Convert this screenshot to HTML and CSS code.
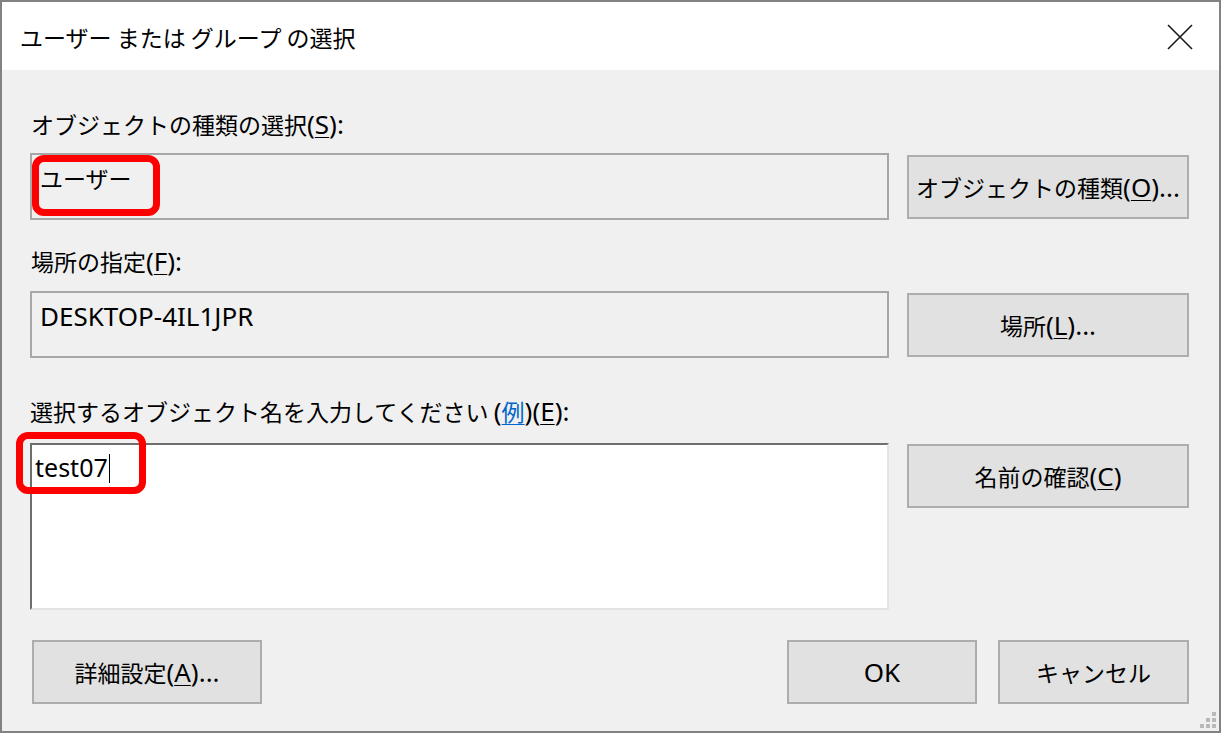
FILE: index.html
```html
<!DOCTYPE html>
<html lang="ja">
<head>
<meta charset="utf-8">
<title>ユーザー または グループ の選択</title>
<link rel="stylesheet" href="styles.css">
</head>
<body>
<div class="window">
  <div class="titlebar">
    <span class="title">ユーザー または グループ の選択</span>
    <svg class="close" width="26" height="26" viewBox="0 0 26 26"><path d="M1 1 L25 25 M25 1 L1 25" stroke="#1a1a1a" stroke-width="1.6" fill="none"/></svg>
  </div>
  <div class="content">
    <div class="label l1">オブジェクトの種類の選択<span class="en">(<u>S</u>):</span></div>
    <div class="row r1">
      <div class="field">ユーザー</div>
      <div class="btn side">オブジェクトの種類<span class="en">(<u>O</u>)...</span></div>
    </div>
    <div class="label l2">場所の指定<span class="en">(<u>F</u>):</span></div>
    <div class="row r2">
      <div class="field"><span class="en">DESKTOP-4IL1JPR</span></div>
      <div class="btn side">場所<span class="en">(<u>L</u>)...</span></div>
    </div>
    <div class="label l3">選択するオブジェクト名を入力してください <span class="en">(</span><a class="link">例</a><span class="en">)(<u>E</u>):</span></div>
    <div class="row r3">
      <div class="textarea"><span class="en typed">test07</span><span class="caret"></span></div>
      <div class="btn side check">名前の確認<span class="en">(<u>C</u>)</span></div>
    </div>
    <div class="footer">
      <div class="btn adv">詳細設定<span class="en">(<u>A</u>)...</span></div>
      <div class="btn ok"><span class="en">OK</span></div>
      <div class="btn cancel">キャンセル</div>
    </div>
  </div>
  <div class="mark m1"></div>
  <div class="mark m2"></div>
  <svg class="grip" width="18" height="18" viewBox="0 0 18 18">
    <rect x="13" y="1" width="4" height="4" fill="#b9b9b9"/>
    <rect x="7" y="7" width="4" height="4" fill="#b9b9b9"/>
    <rect x="13" y="7" width="4" height="4" fill="#b9b9b9"/>
    <rect x="1" y="13" width="4" height="4" fill="#b9b9b9"/>
    <rect x="7" y="13" width="4" height="4" fill="#b9b9b9"/>
    <rect x="13" y="13" width="4" height="4" fill="#b9b9b9"/>
  </svg>
</div>
</body>
</html>
```
FILE: styles.css
```css
html, body {
  margin: 0;
  padding: 0;
  background: #ffffff;
}

.window {
  position: relative;
  box-sizing: border-box;
  width: 1221px;
  height: 733px;
  border: 2px solid #828282;
  display: flex;
  flex-direction: column;
  font-family: "Noto Sans CJK JP", sans-serif;
  font-size: 23px;
  color: #000;
  overflow: hidden;
}

.en {
  font-family: "Noto Sans", "Noto Sans CJK JP", sans-serif;
  font-size: 26px;
}

u {
  text-decoration-thickness: 1px;
  text-underline-offset: 3px;
}

.titlebar {
  height: 68px;
  background: #ffffff;
  display: flex;
  align-items: center;
  justify-content: space-between;
  padding: 0 26px 0 18px;
  flex: none;
}

.title {
  font-size: 23px;
  line-height: 30px;
  margin-top: 2px;
}

.close {
  display: block;
  margin-top: 2px;
}

.content {
  flex: 1;
  background: #f0f0f0;
  padding: 0 30px 0 28px;
  display: flex;
  flex-direction: column;
}

.label {
  line-height: 34px;
  height: 34px;
  white-space: nowrap;
}

.l1 { margin-top: 37px; padding-left: 1px; }
.l2 { margin-top: 24px; padding-left: 1px; }
.l3 { margin-top: 36px; }

.link {
  color: #0066cc;
  text-decoration: underline;
  text-decoration-thickness: 1px;
  text-underline-offset: 3px;
}

.row {
  display: flex;
  gap: 18px;
  align-items: center;
}

.r1 { margin-top: 12px; }
.r2 { margin-top: 13px; }
.r3 { margin-top: 15px; align-items: flex-start; }

.field {
  box-sizing: border-box;
  width: 859px;
  height: 67px;
  border: 2px solid #a7a7a7;
  background: #f0f0f0;
  padding: 6px 8px 0;
  line-height: 34px;
  white-space: nowrap;
}

.textarea {
  box-sizing: border-box;
  width: 859px;
  height: 167px;
  background: #ffffff;
  border-top: 2px solid #6e6e6e;
  border-left: 2px solid #6e6e6e;
  border-right: 2px solid #e3e3e3;
  border-bottom: 2px solid #e3e3e3;
  padding: 5px 3px 0;
  line-height: 34px;
}

.typed {
  font-size: 25px;
}

.caret {
  display: inline-block;
  width: 0;
  height: 29px;
  border-left: 1px solid #000;
  margin-left: 1px;
  vertical-align: -6px;
}

.btn {
  box-sizing: border-box;
  height: 64px;
  background: #e1e1e1;
  border: 2px solid #adadad;
  display: flex;
  align-items: center;
  justify-content: center;
  white-space: nowrap;
  line-height: 34px;
}

.side {
  width: 282px;
  flex: none;
}

.check {
  margin-top: 1px;
}

.footer {
  margin-top: 30px;
  display: flex;
  padding-left: 2px;
  gap: 21px;
}

.adv { width: 230px; }
.ok { width: 190px; margin-left: auto; }
.cancel { width: 191px; }

.mark {
  position: absolute;
  box-sizing: border-box;
  border: 7px solid #ff0000;
  border-radius: 12px;
}

.m1 {
  left: 30px;
  top: 153px;
  width: 128px;
  height: 61px;
}

.m2 {
  left: 14px;
  top: 430px;
  width: 130px;
  height: 62px;
}

.grip {
  position: absolute;
  right: 2px;
  bottom: 2px;
}
```
